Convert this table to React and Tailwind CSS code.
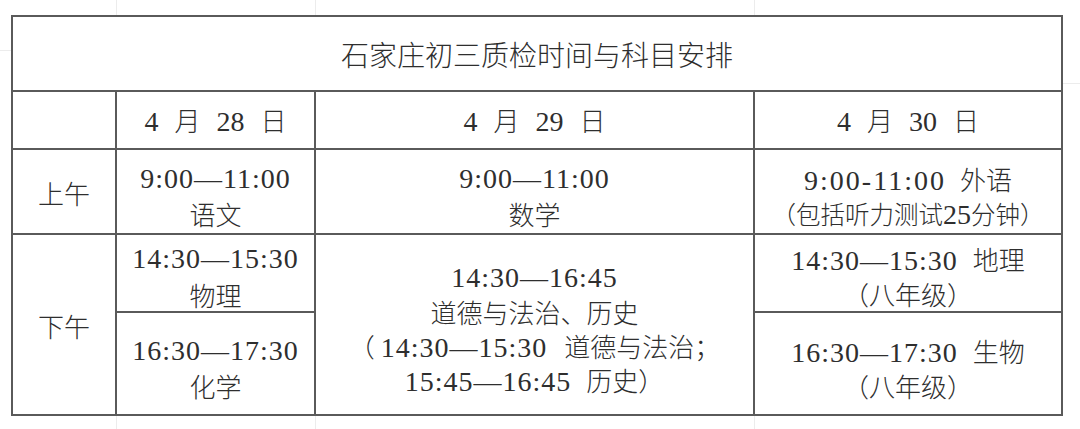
import React from "react";

function N({ children, className = "" }) {
  return (
    <span
      className={`font-['Liberation_Serif','Noto_Sans_CJK_SC',serif] text-[28px] tracking-[1px] ${className}`}
    >
      {children}
    </span>
  );
}

function Cell({ className = "", children }) {
  return (
    <div
      className={`flex flex-col items-center justify-center border-r-2 border-b-2 border-[#5a5a5a] text-center whitespace-pre ${className}`}
    >
      {children}
    </div>
  );
}

function DateLabel({ d }) {
  return (
    <div className="flex items-baseline gap-[16px]">
      <N className="tracking-normal">4</N>
      <span>月</span>
      <N className="tracking-normal">{d}</N>
      <span>日</span>
    </div>
  );
}

export default function App() {
  return (
    <div className="relative h-[429px] w-[1080px] overflow-hidden bg-white font-['Noto_Sans_CJK_SC',sans-serif] text-[26px] font-light text-[#2e2e2e]">
      {/* faint spreadsheet grid behind the table */}
      <div className="absolute left-[116px] top-0 h-[15px] w-px bg-[#ececec]" />
      <div className="absolute left-[315px] top-0 h-[15px] w-px bg-[#ececec]" />
      <div className="absolute left-[754px] top-0 h-[15px] w-px bg-[#ececec]" />
      <div className="absolute left-[116px] top-[416px] h-[13px] w-px bg-[#ececec]" />
      <div className="absolute left-[315px] top-[416px] h-[13px] w-px bg-[#ececec]" />
      <div className="absolute left-[754px] top-[416px] h-[13px] w-px bg-[#ececec]" />
      <div className="absolute left-0 top-[50px] h-px w-[11px] bg-[#ececec]" />
      <div className="absolute right-0 top-[83px] h-px w-[17px] bg-[#ececec]" />

      <div className="pl-[11px] pt-[15px]">
        <div className="grid w-max grid-cols-[104px_199px_439px_308px] grid-rows-[75px_58px_85px_78px_103px] border-l-2 border-t-2 border-[#5a5a5a]">
          <Cell className="col-span-4 text-[28px] leading-[36px]">石家庄初三质检时间与科目安排</Cell>

          <Cell />
          <Cell className="pt-[2px] leading-[36px]">
            <DateLabel d="28" />
          </Cell>
          <Cell className="pt-[2px] leading-[36px]">
            <DateLabel d="29" />
          </Cell>
          <Cell className="pt-[2px] leading-[36px]">
            <DateLabel d="30" />
          </Cell>

          <Cell className="pt-[2px] leading-[36px]">上午</Cell>
          <Cell className="pt-[8px] leading-[35px]">
            <N>9:00—11:00</N>
            <span>语文</span>
          </Cell>
          <Cell className="pt-[8px] leading-[35px]">
            <N>9:00—11:00</N>
            <span>数学</span>
          </Cell>
          <Cell className="pt-[8px] leading-[35px]">
            <span>
              <N className="text-[27px] leading-none tracking-[2px]">9:00-11:00</N>
              <span className="ml-[14px]">外语</span>
            </span>
            <span className="text-[24.5px]">
              （包括听力测试<N className="text-[25px] leading-none tracking-normal">25</N>分钟）
            </span>
          </Cell>

          <Cell className="row-span-2 pt-[2px] leading-[36px]">下午</Cell>
          <Cell className="pt-[8px] leading-[36px]">
            <N>14:30—15:30</N>
            <span>物理</span>
          </Cell>
          <Cell className="row-span-2 pt-[9px] leading-[34px]">
            <N>14:30—16:45</N>
            <span>道德与法治、历史</span>
            <span>
              <span className="mr-[6px]">（</span>
              <N className="leading-none">14:30—15:30</N>
              <span className="ml-[17px]">道德与法治；</span>
            </span>
            <span>
              <N className="leading-none">15:45—16:45</N>
              <span className="ml-[15px]">历史）</span>
            </span>
          </Cell>
          <Cell className="pt-[6px] leading-[35px]">
            <span>
              <N className="leading-none">14:30—15:30</N>
              <span className="ml-[15px]">地理</span>
            </span>
            <span>（八年级）</span>
          </Cell>

          <Cell className="pt-[9px] leading-[35px]">
            <N>16:30—17:30</N>
            <span>化学</span>
          </Cell>
          <Cell className="pt-[9px] leading-[35px]">
            <span>
              <N className="leading-none">16:30—17:30</N>
              <span className="ml-[15px]">生物</span>
            </span>
            <span>（八年级）</span>
          </Cell>
        </div>
      </div>
    </div>
  );
}
